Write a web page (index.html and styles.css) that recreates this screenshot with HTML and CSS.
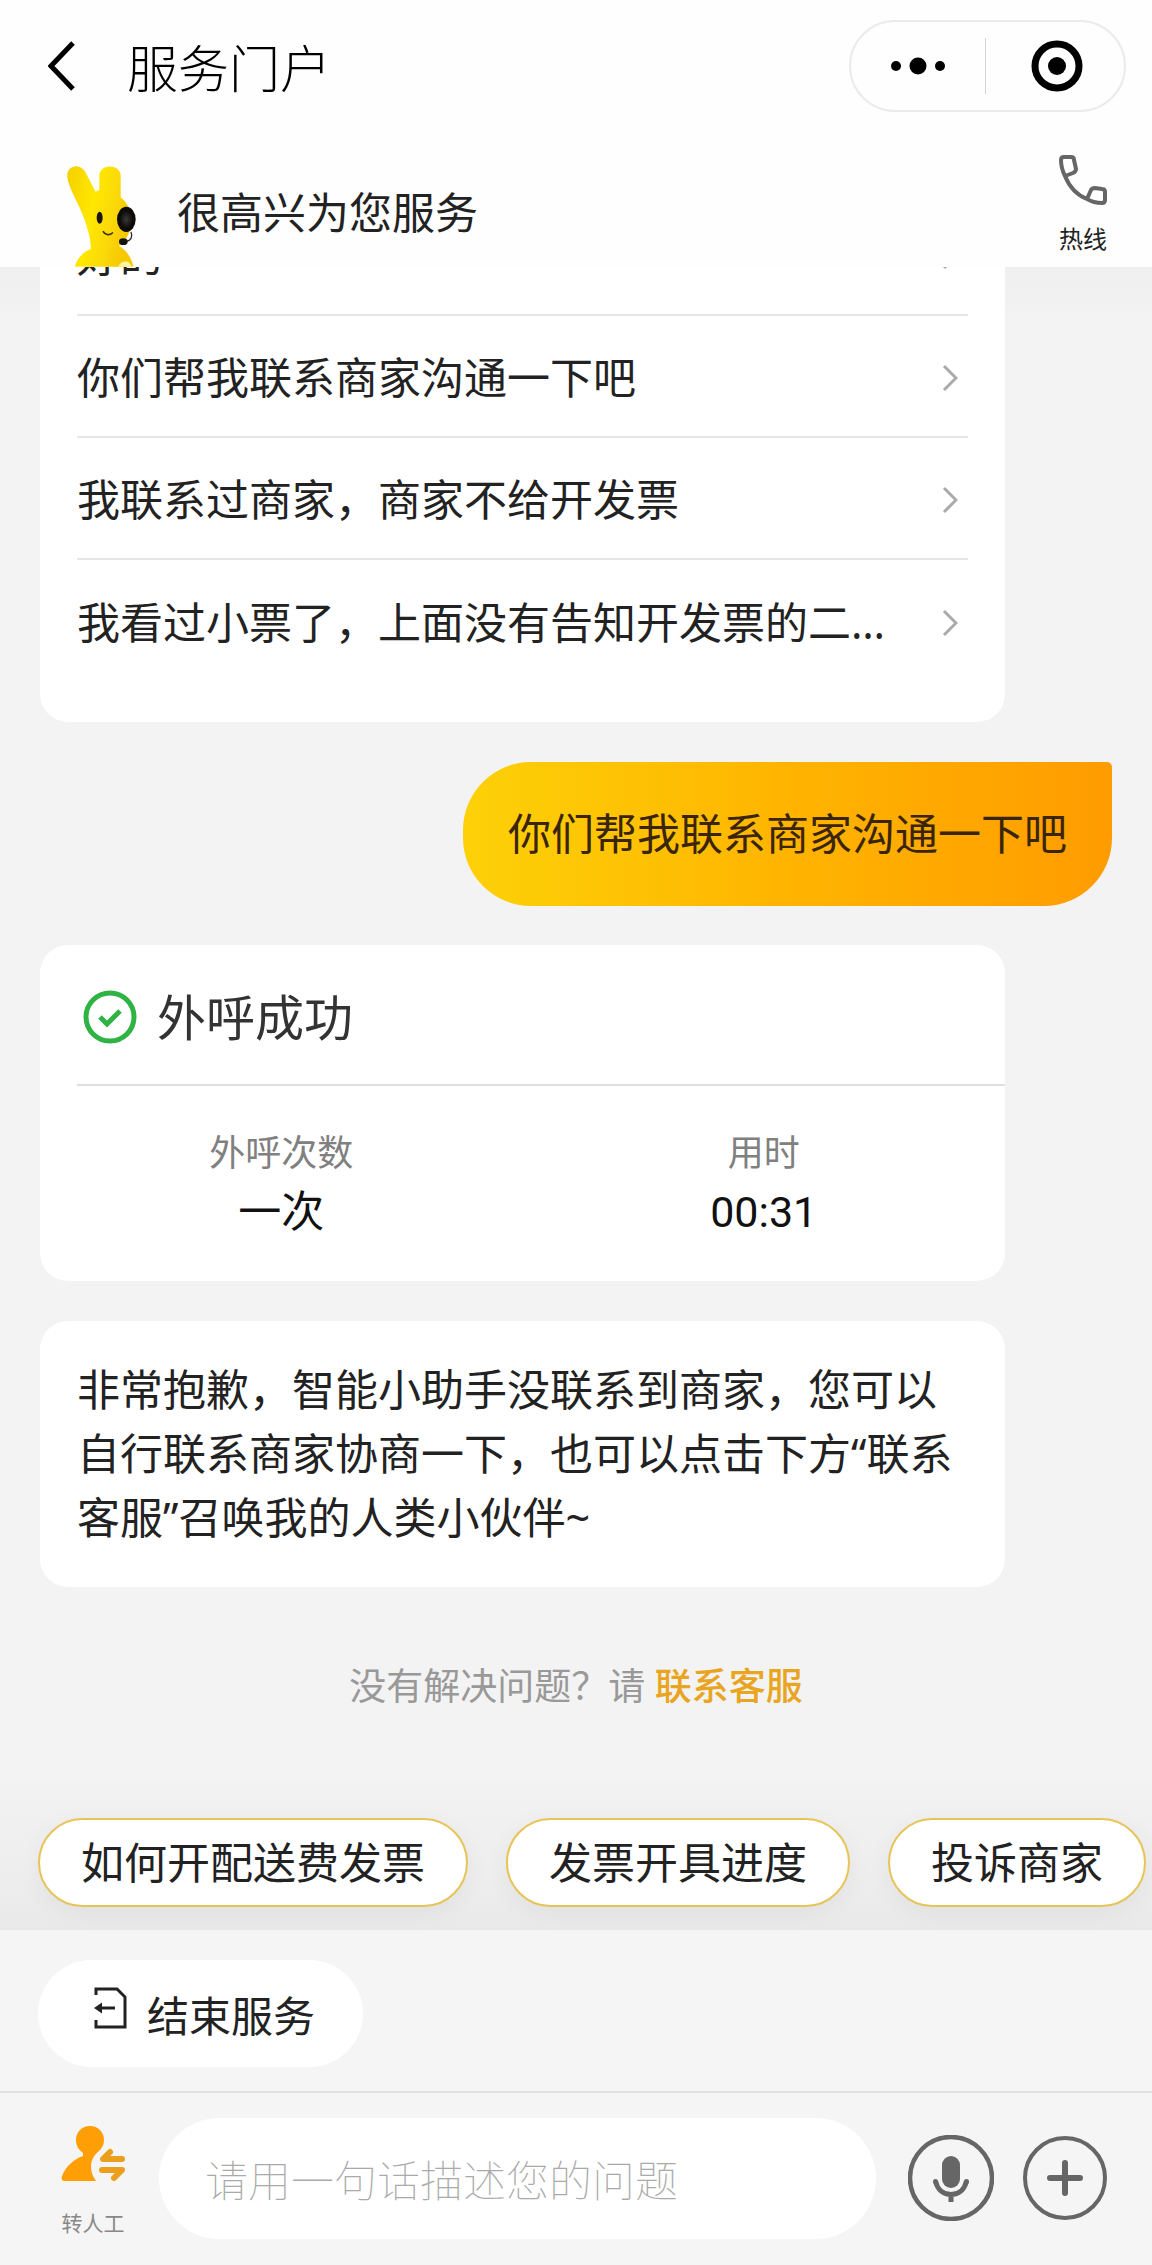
FILE: index.html
```html
<!DOCTYPE html>
<html lang="zh-CN">
<head>
<meta charset="utf-8">
<meta name="viewport" content="width=device-width, initial-scale=1">
<title>服务门户</title>
<link rel="stylesheet" href="styles.css">
</head>
<body>
<header class="header">
  <div class="topbar">
    <button class="icon-button" type="button" aria-label="返回">
      <svg width="28" height="50" viewBox="0 0 28 50" fill="none" stroke="#000" stroke-width="5"><path d="M25 2 3 25l22 23"/></svg>
    </button>
    <h1 class="title">服务门户</h1>
    <div class="capsule">
      <button class="capsule-button" type="button" aria-label="更多">
        <svg width="56" height="20" viewBox="0 0 56 20"><circle cx="6" cy="10" r="5"/><circle cx="28" cy="10" r="8.5"/><circle cx="50" cy="10" r="5"/></svg>
      </button>
      <button class="capsule-button capsule-close" type="button" aria-label="关闭">
        <svg width="52" height="52" viewBox="0 0 52 52"><circle cx="26" cy="26" r="22" fill="none" stroke="#000" stroke-width="7"/><circle cx="26" cy="26" r="9"/></svg>
      </button>
    </div>
  </div>
  <div class="intro">
    <svg class="mascot" width="72" height="102" viewBox="45 45 216 306" role="img" aria-label="客服助手">
      <defs>
        <linearGradient id="fur" x1="0" y1="0" x2="1" y2="0.3">
          <stop offset="0" stop-color="#f5cf00"/><stop offset="0.45" stop-color="#ffe800"/><stop offset="0.75" stop-color="#fbd90a"/><stop offset="1" stop-color="#f6c800"/>
        </linearGradient>
        <radialGradient id="pad"><stop offset="0" stop-color="#3a3838"/><stop offset="0.7" stop-color="#0c0b08"/></radialGradient>
      </defs>
      <path fill="url(#fur)" d="M52 82C48 46 92 36 108 70l29 55 11-6V78c0-38 64-38 64 0v64c28 22 38 58 28 98-8 28-25 40-33 48 23 12 38 37 43 62H75c5-25 25-45 47-52 2-28-10-68-24-103C85 160 55 112 52 82Z"/>
      <path fill="#fff3a0" d="M205 350c4-12 18-18 30-14 5 5 8 9 10 14Z"/>
      <ellipse cx="149" cy="203" rx="9" ry="18" fill="#1a1405"/>
      <path d="M160 245c4 10 20 12 27 4" fill="none" stroke="#4a3500" stroke-width="5" stroke-linecap="round"/>
      <ellipse cx="229" cy="208" rx="28" ry="38" fill="url(#pad)"/>
      <path d="M243 246c6 14 0 26-14 28" fill="none" stroke="#2a2a2a" stroke-width="4"/>
      <ellipse cx="220" cy="275" rx="13" ry="10" fill="#15130f"/>
    </svg>
    <p class="greeting">很高兴为您服务</p>
    <button class="hotline" type="button">
      <svg width="48" height="50" viewBox="0 0 48 50" fill="none" stroke="#666" stroke-width="4" stroke-linejoin="round" stroke-linecap="round"><path d="M6 21C3 15 2 9 2 5c0-2 1-3 3-3h7c2 0 3 1 3 3l2 9c0 2-1 3-3 4L6 21c4 10 12 19 22 23l4-9c1-2 2-2 4-2l7 1c2 0 3 1 3 3v8c0 2-1 3-3 3-5 0-10-1-15-4"/></svg>
      <span>热线</span>
    </button>
  </div>
</header>

<main class="chat">
  <section class="card questions">
    <ul class="question-list">
      <li><button class="question" type="button"><span>好的</span><svg class="chevron" viewBox="0 0 16 28"><path d="M2 2l12 12L2 26"/></svg></button></li>
      <li><button class="question" type="button"><span>你们帮我联系商家沟通一下吧</span><svg class="chevron" viewBox="0 0 16 28"><path d="M2 2l12 12L2 26"/></svg></button></li>
      <li><button class="question" type="button"><span>我联系过商家，商家不给开发票</span><svg class="chevron" viewBox="0 0 16 28"><path d="M2 2l12 12L2 26"/></svg></button></li>
      <li><button class="question" type="button"><span>我看过小票了，上面没有告知开发票的二…</span><svg class="chevron" viewBox="0 0 16 28"><path d="M2 2l12 12L2 26"/></svg></button></li>
    </ul>
  </section>

  <p class="reply">你们帮我联系商家沟通一下吧</p>

  <section class="card call">
    <h2 class="call-title">
      <svg width="54" height="54" viewBox="0 0 54 54" fill="none" stroke="#2fb344" stroke-width="5"><circle cx="27" cy="27" r="24"/><path d="M17 27l7 7 13-13"/></svg>
      <span>外呼成功</span>
    </h2>
    <dl class="stats">
      <div class="stat"><dt>外呼次数</dt><dd>一次</dd></div>
      <div class="stat"><dt>用时</dt><dd>00:31</dd></div>
    </dl>
  </section>

  <section class="card message">
    <p>非常抱歉，智能小助手没联系到商家，您可以自行联系商家协商一下，也可以点击下方“联系客服”召唤我的人类小伙伴~</p>
  </section>

  <p class="hint">没有解决问题？请 <a href="#agent">联系客服</a></p>

  <nav class="chips">
    <button class="chip" type="button">如何开配送费发票</button>
    <button class="chip" type="button">发票开具进度</button>
    <button class="chip" type="button">投诉商家</button>
  </nav>
</main>

<footer class="footer">
  <div class="actions">
    <button class="end" type="button">
      <svg width="34" height="42" viewBox="0 0 34 42" fill="none" stroke="#222" stroke-width="3"><path d="M3 8V2h21l8 8v30H3v-7M22 21H6"/><path d="M9 15.500L1 21l8 5.500z" fill="#222" stroke="none"/></svg>
      <span>结束服务</span>
    </button>
  </div>
  <form class="composer">
    <button class="agent" id="agent" type="button">
      <svg width="64" height="58" viewBox="0 0 64 58"><path fill="#ff9f05" d="M29 1c8 0 14 6 14 14 0 5-2 8-5 11-5 4-8 9-8 16 0 5 2 10 5 14H4c-3 0-4-2-3-5C5 41 13 34 22 31v-3c-4-3-7-7-7-13C15 7 21 1 29 1Z"/><path fill="none" stroke="#ec9f1c" stroke-width="6" stroke-linecap="round" stroke-linejoin="round" d="M61 34H42l7-7M41 45h20l-8 8"/></svg>
      <span>转人工</span>
    </button>
    <input class="field" type="text" aria-label="问题描述" placeholder="请用一句话描述您的问题">
    <div class="tools">
      <button class="icon-button" type="button" aria-label="语音输入">
        <svg width="86" height="86" viewBox="0 0 86 86"><circle cx="43" cy="43" r="41" fill="none" stroke="#666" stroke-width="4.500"/><rect x="34" y="21" width="18" height="32" rx="9" fill="#666"/><path d="M27.500 46c2 9 8 13.500 15.500 13.500S56.500 55 58.500 46M43 60v7" fill="none" stroke="#666" stroke-width="5"/><circle cx="27.500" cy="46.500" r="2.500" fill="#666"/><circle cx="58.500" cy="46.500" r="2.500" fill="#666"/></svg>
      </button>
      <button class="icon-button" type="button" aria-label="更多功能">
        <svg width="84" height="84" viewBox="0 0 84 84" fill="none" stroke="#666"><circle cx="42" cy="42" r="40" stroke-width="4"/><path stroke-width="6" stroke-linecap="round" d="M27 42h30M42 27v30"/></svg>
      </button>
    </div>
  </form>
</footer>
</body>
</html>
```
FILE: styles.css
```css
* {
  box-sizing: border-box;
}

body {
  display: flex;
  flex-direction: column;
  min-height: 100vh;
  margin: 0;
  background: #f3f3f3;
  color: #222;
  font-family: "Noto Sans", "Noto Sans CJK SC", sans-serif;
  font-size: 43px;
  line-height: 64px;
}

h1, h2, p, ul, dl, dd {
  margin: 0;
  padding: 0;
  font-weight: 400;
}

button {
  padding: 0;
  border: 0;
  background: none;
  color: inherit;
  font: inherit;
  cursor: pointer;
}

svg {
  display: block;
  flex: none;
}

/* Header */
.header {
  position: relative;
  z-index: 1;
  background: #fefefe;
}

.topbar {
  display: flex;
  align-items: center;
  padding: 20px 26px 0 48px;
}

.title {
  margin-left: 51px;
  padding-top: 4px;
  color: #000;
  font-size: 51px;
  font-weight: 300;
}

.capsule {
  display: flex;
  align-items: center;
  width: 277px;
  height: 92px;
  margin-left: auto;
  border: 2px solid #ebebeb;
  border-radius: 46px;
}

.capsule-button {
  display: flex;
  flex: 1;
  align-items: center;
  justify-content: center;
  height: 56px;
}

.capsule-close {
  padding-left: 4px;
  border-left: 1px solid #d4d4d4;
}

.intro {
  display: flex;
  align-items: flex-end;
  height: 155px;
  padding: 0 45px 0 65px;
}

.greeting {
  margin: 0 auto 22px 40px;
}

.hotline {
  display: flex;
  flex-direction: column;
  align-items: center;
  gap: 18px;
  margin-bottom: 12px;
  font-size: 24px;
  line-height: 32px;
}

/* Conversation */
.chat {
  display: flex;
  flex: 1;
  flex-direction: column;
  overflow: hidden;
  background: linear-gradient(#efefef, #f3f3f3 60px);
}

.card {
  margin: 0 147px 0 40px;
  border-radius: 28px;
  background: #fff;
}

/* Scrolled so that the first row is partly under the header */
.questions {
  margin-top: -73px;
  padding: 0 37px 40px;
}

.question-list {
  list-style: none;
}

.question {
  display: flex;
  align-items: center;
  justify-content: space-between;
  width: 100%;
  height: 122px;
  padding: 4px 10px 0 0;
  border-bottom: 2px solid #e6e6e6;
  text-align: left;
  white-space: nowrap;
}

li:last-child .question {
  border-bottom: 0;
}

.chevron {
  width: 16px;
  height: 28px;
  fill: none;
  stroke: #aaa;
  stroke-width: 3;
}

.reply {
  align-self: flex-end;
  margin: 40px 40px 39px;
  padding: 40px 45px;
  border-radius: 68px 5px 68px 68px;
  background: linear-gradient(90deg, #fdd108, #ffb400 50%, #ff9c00);
  color: #3a2508;
}

.call-title {
  display: flex;
  align-items: center;
  gap: 20px;
  height: 141px;
  margin-left: 37px;
  padding: 4px 0 0 6px;
  border-bottom: 2px solid #dedede;
  color: #333;
  font-size: 49px;
}

.stats {
  display: grid;
  grid-template-columns: 1fr 1fr;
  padding: 40px 0 37px;
  text-align: center;
}

.stat dt {
  color: #808080;
  font-size: 36px;
  line-height: 54px;
}

.stat dd {
  color: #111;
  font-family: Roboto, "Noto Sans CJK SC", sans-serif;
}

.message {
  margin-top: 40px;
  padding: 37px;
}

.hint {
  margin-top: 72px;
  color: #999;
  font-size: 37px;
  line-height: 54px;
  text-align: center;
}

.hint a {
  color: #e9a522;
  font-weight: 500;
  text-decoration: none;
}

.chips {
  display: flex;
  gap: 38px;
  margin-top: auto;
  padding: 105px 0 23px 38px;
  background: linear-gradient(transparent 50px, #eeeeee 160px, #e9e9e9);
}

.chip {
  flex: none;
  height: 89px;
  padding: 0 41px;
  border: 2px solid #e7c458;
  border-radius: 45px;
  background: #fff;
  box-shadow: 0 6px 24px rgba(0, 0, 0, 0.05);
}

/* Footer */
.footer {
  background: #f5f5f5;
}

.actions {
  padding: 30px 38px 24px;
  border-bottom: 2px solid #e0e0e0;
}

.end {
  display: flex;
  align-items: center;
  gap: 20px;
  height: 107px;
  padding: 5px 48px 0 55px;
  border-radius: 54px;
  background: #fff;
  font-size: 42px;
}

.end svg {
  margin-bottom: 16px;
}

.composer {
  display: flex;
  align-items: center;
  padding: 24px 45px 27px 61px;
}

.agent {
  display: flex;
  flex-direction: column;
  align-items: center;
  gap: 24px;
  width: 64px;
  padding-top: 8px;
  color: #888;
  font-size: 21px;
  line-height: 32px;
  white-space: nowrap;
}

.field {
  flex: 1;
  min-width: 0;
  height: 121px;
  margin: 0 32px 0 34px;
  padding: 4px 46px 0;
  border: 0;
  border-radius: 61px;
  background: #fff;
  color: #222;
  font: inherit;
}

.field::placeholder {
  color: #aaa;
  font-weight: 100;
  opacity: 1;
}

.tools {
  display: flex;
  align-items: center;
  gap: 29px;
}
```
